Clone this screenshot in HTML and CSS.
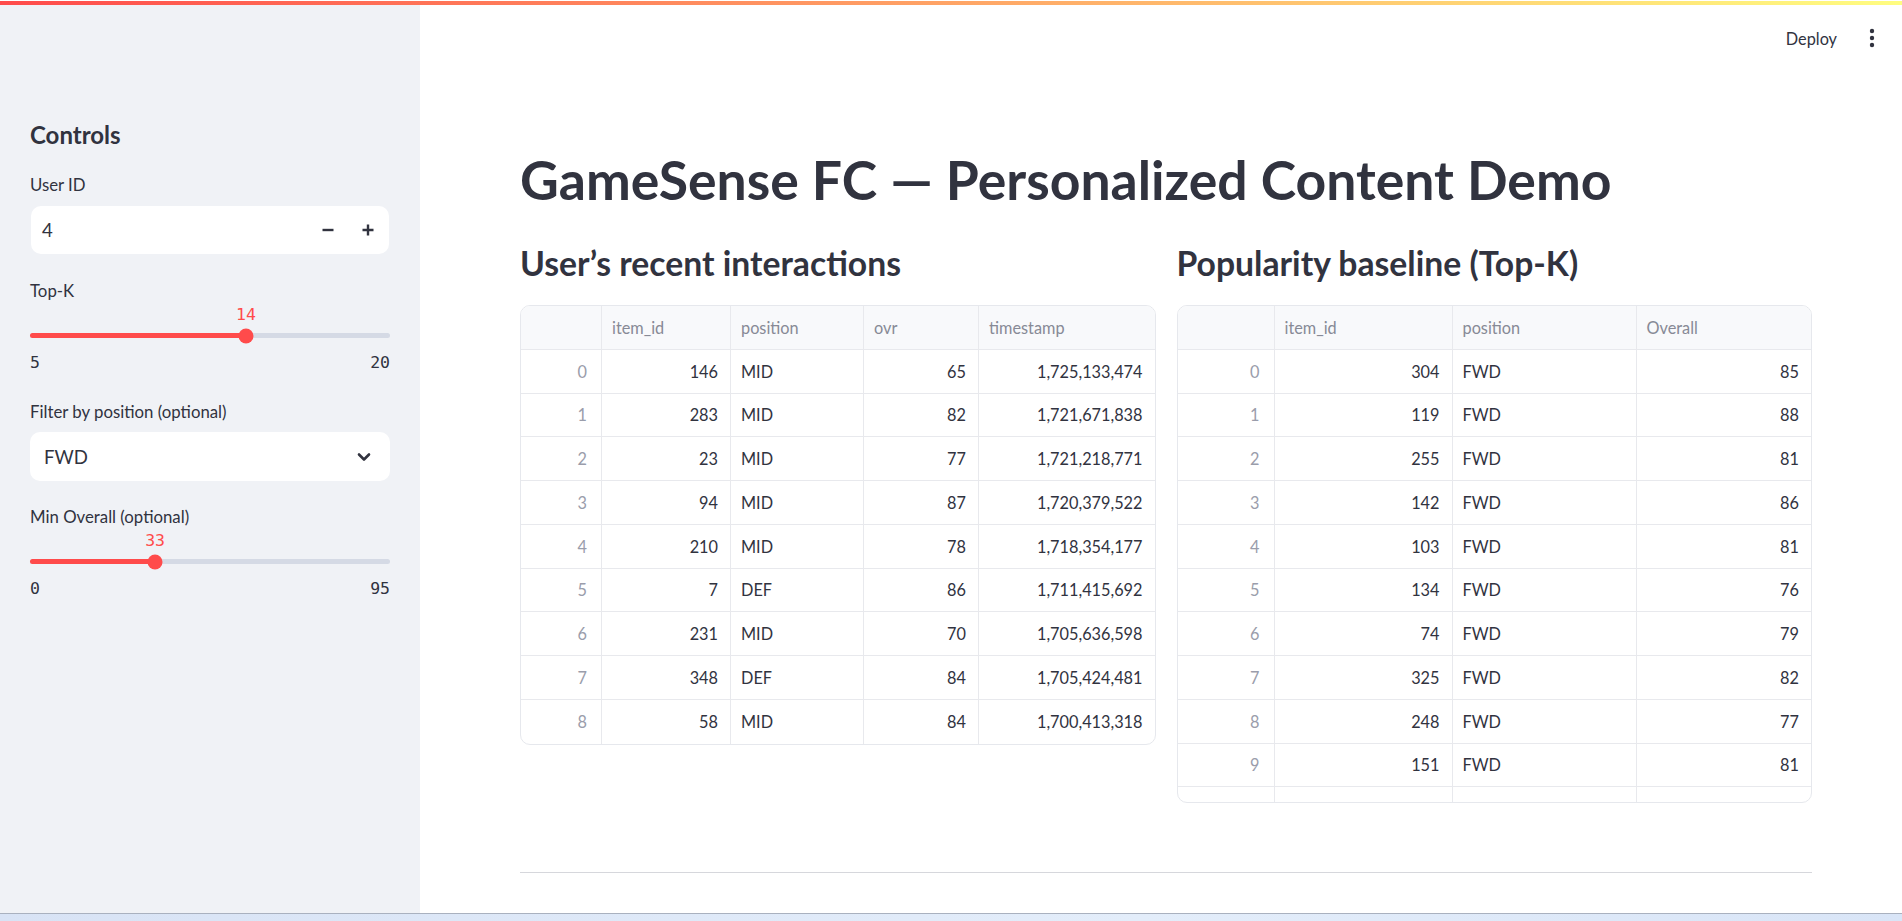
FILE: index.html
```html
<!DOCTYPE html>
<html lang="en">
<head>
<meta charset="utf-8">
<title>GameSense FC</title>
<link rel="stylesheet" href="styles.css">
</head>
<body>
<div class="app">
  <div class="decoration"></div>
  <div class="shell">
    <aside class="sidebar">
      <h2 class="side-title">Controls</h2>

      <label class="w-label lbl-user">User ID</label>
      <div class="number-input">
        <span class="num-value">4</span>
        <span class="num-btns">
          <svg class="step" width="14" height="14" viewBox="0 0 14 14"><path d="M1.5 7h11" stroke="#31333F" stroke-width="2.4"/></svg>
          <svg class="step" width="14" height="14" viewBox="0 0 14 14"><path d="M1.5 7h11M7 1.5v11" stroke="#31333F" stroke-width="2.4"/></svg>
        </span>
      </div>

      <label class="w-label lbl-topk">Top-K</label>
      <div class="slider">
        <div class="val-row"><span class="thumb-val" style="left:60%">14</span></div>
        <div class="track">
          <div class="fill" style="width:60%"></div>
          <span class="thumb" style="left:60%"></span>
        </div>
        <div class="range"><span>5</span><span>20</span></div>
      </div>

      <label class="w-label lbl-filter">Filter by position (optional)</label>
      <div class="select">
        <span>FWD</span>
        <svg width="14" height="10" viewBox="0 0 14 10"><path d="M2 2.5l5 5 5-5" fill="none" stroke="#31333F" stroke-width="2.6" stroke-linecap="round" stroke-linejoin="round"/></svg>
      </div>

      <label class="w-label lbl-min">Min Overall (optional)</label>
      <div class="slider">
        <div class="val-row"><span class="thumb-val" style="left:34.74%">33</span></div>
        <div class="track">
          <div class="fill" style="width:34.74%"></div>
          <span class="thumb" style="left:34.74%"></span>
        </div>
        <div class="range"><span>0</span><span>95</span></div>
      </div>
    </aside>

    <main class="main">
      <header class="topbar">
        <span class="deploy">Deploy</span>
        <svg class="kebab" width="6" height="20" viewBox="0 0 6 20"><circle cx="3" cy="3" r="2.2" fill="#31333F"/><circle cx="3" cy="10" r="2.2" fill="#31333F"/><circle cx="3" cy="17" r="2.2" fill="#31333F"/></svg>
      </header>

      <h1 class="title">GameSense FC — Personalized Content Demo</h1>

      <div class="columns">
        <section class="col">
          <h3 class="subheader">User’s recent interactions</h3>
          <div class="grid grid-left">
            <div class="row head"><div class="c"></div><div class="c">item_id</div><div class="c">position</div><div class="c">ovr</div><div class="c">timestamp</div></div>
            <div class="row"><div class="c idx">0</div><div class="c num">146</div><div class="c">MID</div><div class="c num">65</div><div class="c num">1,725,133,474</div></div>
            <div class="row"><div class="c idx">1</div><div class="c num">283</div><div class="c">MID</div><div class="c num">82</div><div class="c num">1,721,671,838</div></div>
            <div class="row"><div class="c idx">2</div><div class="c num">23</div><div class="c">MID</div><div class="c num">77</div><div class="c num">1,721,218,771</div></div>
            <div class="row"><div class="c idx">3</div><div class="c num">94</div><div class="c">MID</div><div class="c num">87</div><div class="c num">1,720,379,522</div></div>
            <div class="row"><div class="c idx">4</div><div class="c num">210</div><div class="c">MID</div><div class="c num">78</div><div class="c num">1,718,354,177</div></div>
            <div class="row"><div class="c idx">5</div><div class="c num">7</div><div class="c">DEF</div><div class="c num">86</div><div class="c num">1,711,415,692</div></div>
            <div class="row"><div class="c idx">6</div><div class="c num">231</div><div class="c">MID</div><div class="c num">70</div><div class="c num">1,705,636,598</div></div>
            <div class="row"><div class="c idx">7</div><div class="c num">348</div><div class="c">DEF</div><div class="c num">84</div><div class="c num">1,705,424,481</div></div>
            <div class="row last"><div class="c idx">8</div><div class="c num">58</div><div class="c">MID</div><div class="c num">84</div><div class="c num">1,700,413,318</div></div>
          </div>
        </section>

        <section class="col">
          <h3 class="subheader">Popularity baseline (Top-K)</h3>
          <div class="grid grid-right">
            <div class="row head"><div class="c"></div><div class="c">item_id</div><div class="c">position</div><div class="c">Overall</div></div>
            <div class="row"><div class="c idx">0</div><div class="c num">304</div><div class="c">FWD</div><div class="c num">85</div></div>
            <div class="row"><div class="c idx">1</div><div class="c num">119</div><div class="c">FWD</div><div class="c num">88</div></div>
            <div class="row"><div class="c idx">2</div><div class="c num">255</div><div class="c">FWD</div><div class="c num">81</div></div>
            <div class="row"><div class="c idx">3</div><div class="c num">142</div><div class="c">FWD</div><div class="c num">86</div></div>
            <div class="row"><div class="c idx">4</div><div class="c num">103</div><div class="c">FWD</div><div class="c num">81</div></div>
            <div class="row"><div class="c idx">5</div><div class="c num">134</div><div class="c">FWD</div><div class="c num">76</div></div>
            <div class="row"><div class="c idx">6</div><div class="c num">74</div><div class="c">FWD</div><div class="c num">79</div></div>
            <div class="row"><div class="c idx">7</div><div class="c num">325</div><div class="c">FWD</div><div class="c num">82</div></div>
            <div class="row"><div class="c idx">8</div><div class="c num">248</div><div class="c">FWD</div><div class="c num">77</div></div>
            <div class="row"><div class="c idx">9</div><div class="c num">151</div><div class="c">FWD</div><div class="c num">81</div></div>
            <div class="row"><div class="c"></div><div class="c"></div><div class="c"></div><div class="c"></div></div>
          </div>
        </section>
      </div>

      <hr class="divider">
    </main>
  </div>
  <div class="taskbar"></div>
</div>
</body>
</html>
```

FILE: styles.css
```css
* { box-sizing: border-box; }
html, body { margin: 0; padding: 0; }
body {
  background: #ffffff;
  color: #31333F;
  font-family: Lato, "Noto Sans", sans-serif;
}
.app {
  width: 1902px;
  height: 921px;
  display: flex;
  flex-direction: column;
  overflow: hidden;
}
.decoration {
  height: 4px;
  margin-top: 1px;
  flex: none;
  background: linear-gradient(90deg, #ff4b4b, #fffd80);
}
.shell {
  flex: 1;
  display: flex;
  min-height: 0;
}
.taskbar {
  flex: none;
  height: 8px;
  border-top: 1px solid #a9b1bf;
  background: linear-gradient(90deg, #d8e3f5, #e3edfa 60%, #d9e5f7);
}

/* ---------- sidebar ---------- */
.sidebar {
  width: 420px;
  flex: none;
  background: #F0F2F6;
  padding: 115px 30px 0 30px;
  display: flex;
  flex-direction: column;
}
.side-title {
  margin: 0;
  font-size: 24px;
  line-height: 30px;
  font-weight: 700;
}
.w-label {
  display: block;
  font-size: 16.8px;
  line-height: 22px;
}
.lbl-user { margin-top: 24px; }
.lbl-topk { margin-top: 26px; }
.lbl-filter { margin-top: 27.5px; }
.lbl-min { margin-top: 25px; }

.number-input {
  margin-top: 10px;
  height: 48px;
  background: #ffffff;
  border-radius: 10px;
  display: flex;
  align-items: center;
  justify-content: space-between;
  padding: 0 14px 0 11px;
  margin-right: 1px;
  margin-left: 1px;
}
.num-value { font-size: 18.6px; }
.num-btns { display: flex; gap: 26px; align-items: center; }
.step { display: block; }

.slider { display: flex; flex-direction: column; }
.val-row {
  position: relative;
  height: 20px;
  margin-top: 3px;
}
.thumb-val {
  position: absolute;
  top: 0;
  transform: translateX(-50%);
  font-family: "DejaVu Sans Mono", "Liberation Mono", monospace;
  font-size: 16.5px;
  line-height: 20px;
  color: #FF4B4B;
}
.track {
  position: relative;
  height: 5px;
  margin-top: 8px;
  border-radius: 3px;
  background: #D5DAE5;
}
.fill {
  height: 100%;
  border-radius: 3px;
  background: #FF4B4B;
}
.thumb {
  position: absolute;
  top: 50%;
  width: 15px;
  height: 15px;
  border-radius: 50%;
  background: #FF4B4B;
  transform: translate(-50%, -50%);
}
.range {
  display: flex;
  justify-content: space-between;
  margin-top: 15px;
  font-family: "DejaVu Sans Mono", "Liberation Mono", monospace;
  font-size: 16.5px;
  line-height: 20px;
  color: #31333F;
}
.select {
  margin-top: 9.5px;
  height: 49px;
  background: #ffffff;
  border-radius: 10px;
  display: flex;
  align-items: center;
  justify-content: space-between;
  padding: 0 19px 0 14px;
  font-size: 18.6px;
}
.select svg { display: block; }

/* ---------- main ---------- */
.main {
  flex: 1;
  min-width: 0;
  padding: 0 90px 0 100px;
  display: flex;
  flex-direction: column;
}
.topbar {
  height: 70px;
  margin-right: -90px;
  padding-right: 27px;
  display: flex;
  align-items: center;
  justify-content: flex-end;
  gap: 32px;
}
.deploy {
  font-size: 16.3px;
  margin-top: -4px;
}
.kebab { display: block; margin-top: -4px; }

.title {
  margin: 71px 0 0 0;
  font-size: 53.5px;
  line-height: 66px;
  font-weight: 700;
  letter-spacing: 0;
}
.columns {
  display: flex;
  gap: 21px;
  margin-top: 30px;
}
.col { flex: 1; min-width: 0; }
.subheader {
  margin: 0;
  font-size: 33.7px;
  line-height: 42px;
  font-weight: 700;
}
.grid {
  margin-top: 21px;
  border: 1px solid #e6e8ed;
  border-radius: 10px;
  overflow: hidden;
  font-size: 16.3px;
}
.grid-right { height: 498px; }
.row {
  display: grid;
  height: 43.75px;
  border-bottom: 1px solid #e8e9ed;
}
.row.last { border-bottom: none; }
.grid-left .row { grid-template-columns: 81px 129px 133px 115px 1fr; }
.grid-right .row { grid-template-columns: 97px 178px 184px 1fr; }
.c {
  display: flex;
  align-items: center;
  padding: 0 10px;
  border-right: 1px solid #e8e9ed;
  white-space: nowrap;
}
.c:last-child { border-right: none; }
.head { background: #F8F9FB; }
.head .c { color: #878a96; }
.num { justify-content: flex-end; padding-right: 12px; }
.idx { justify-content: flex-end; padding-right: 14px; color: #9a9dab; }

.divider {
  margin: 69px 0 0 0;
  border: none;
  border-top: 1px solid #d6d7dc;
}
```
